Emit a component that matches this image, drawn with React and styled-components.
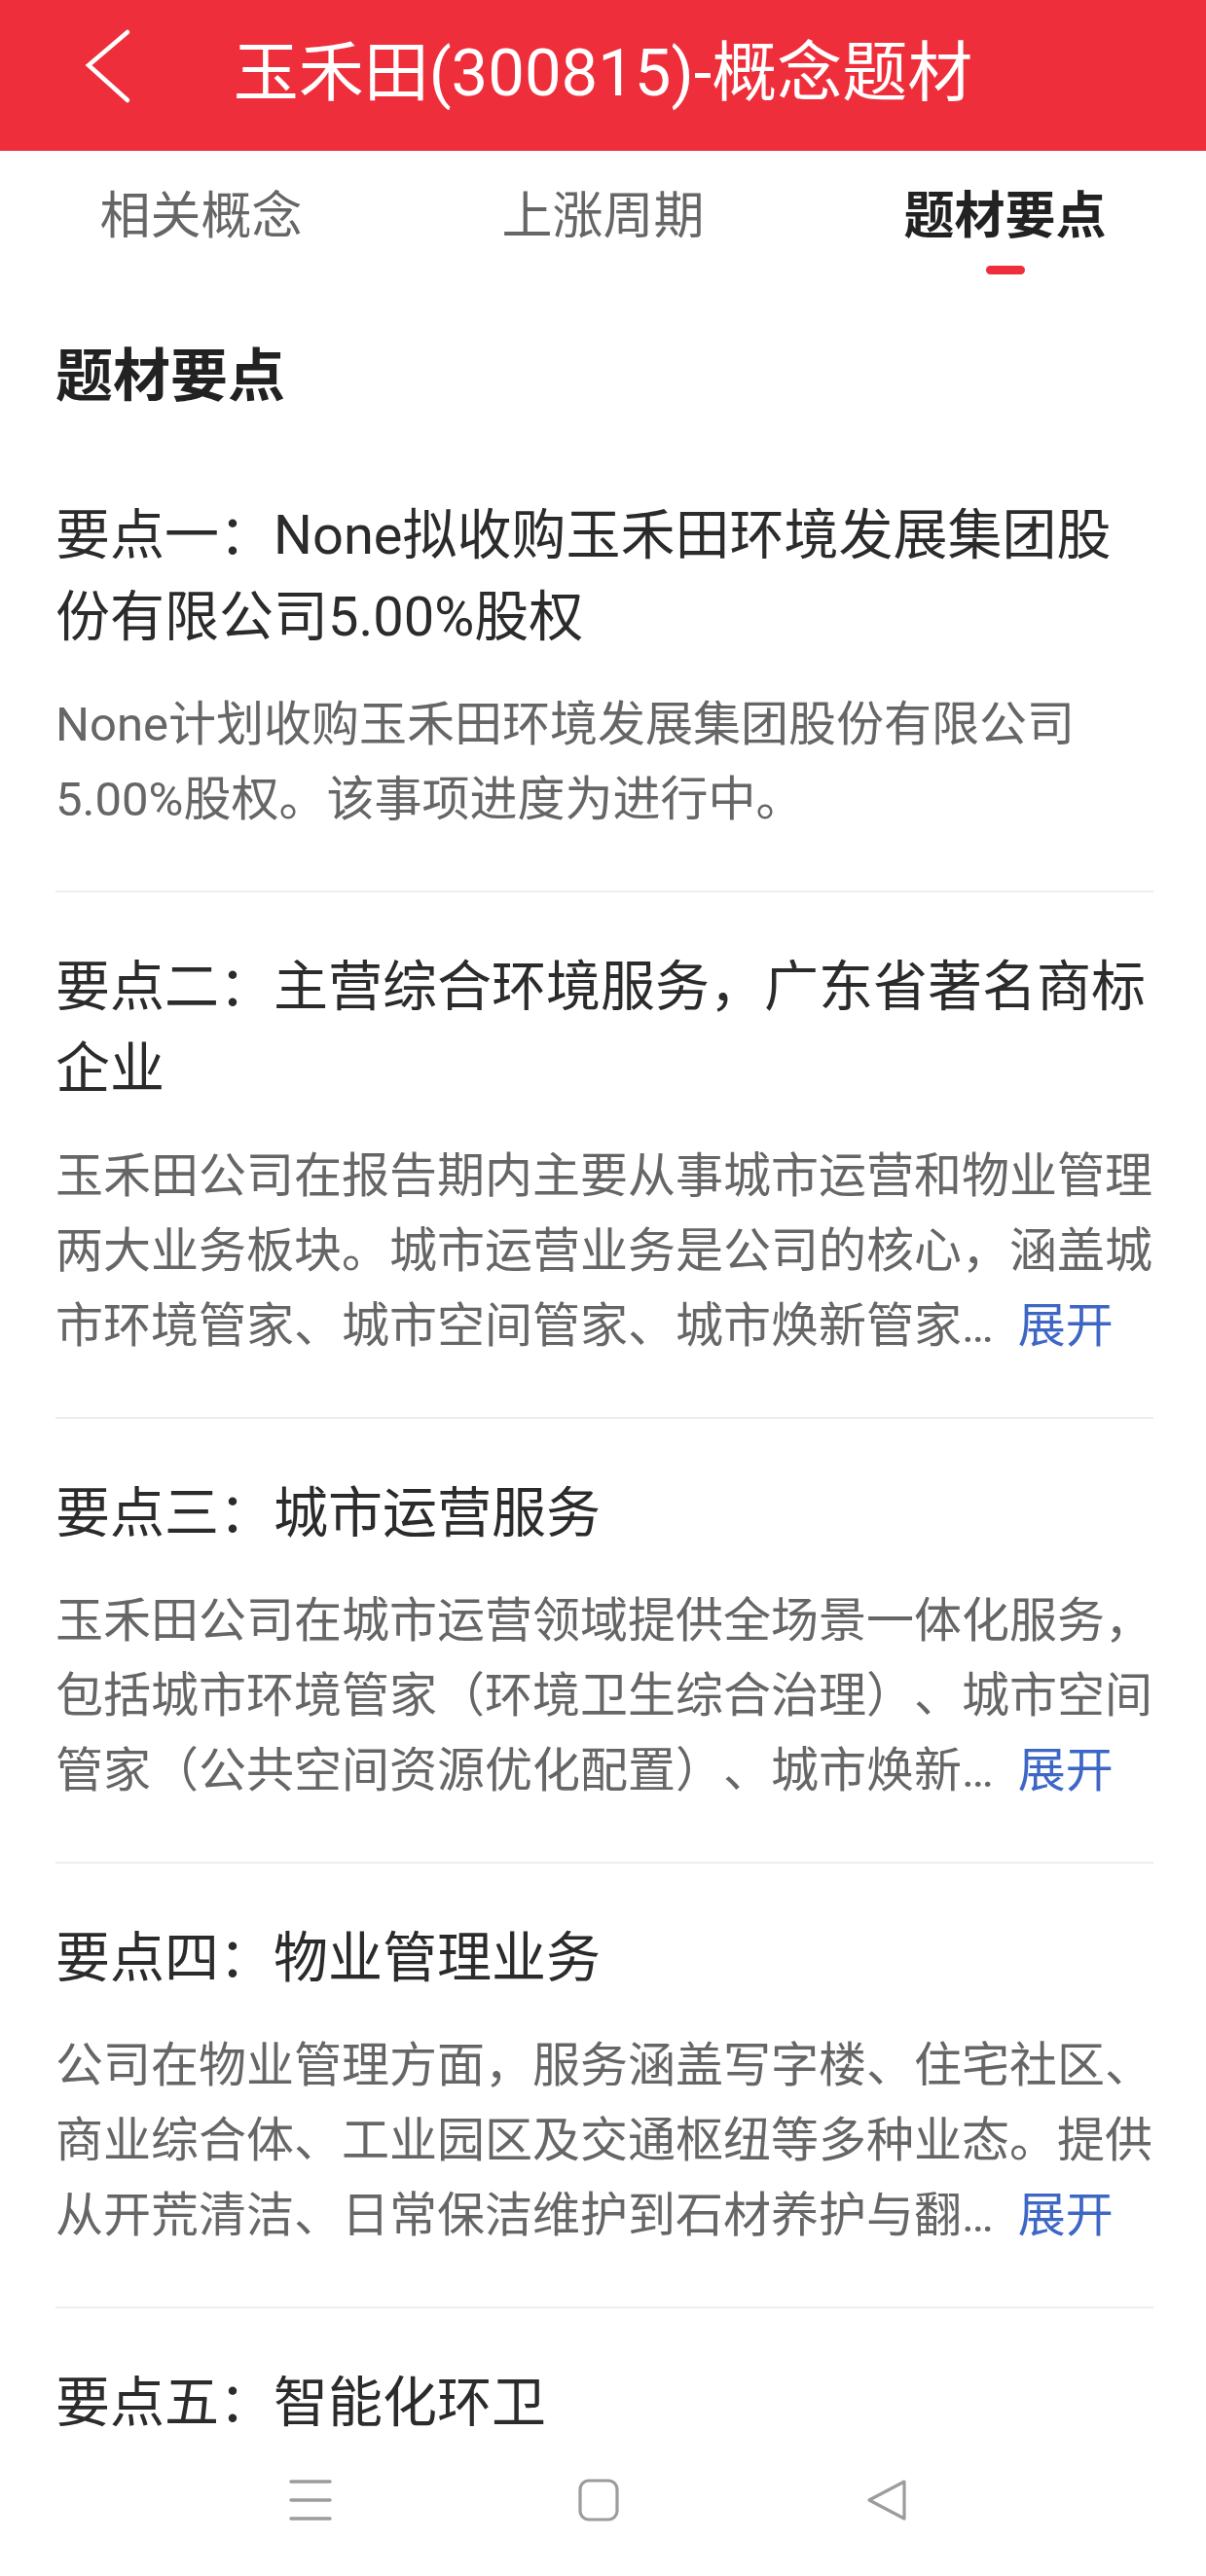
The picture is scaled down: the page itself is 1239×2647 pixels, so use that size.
import React from "react";
import styled, { createGlobalStyle } from "styled-components";

const GlobalStyle = createGlobalStyle`
  html, body {
    margin: 0;
    padding: 0;
    background: #ffffff;
  }
  body {
    font-family: Roboto, "Noto Sans CJK SC", "Noto Sans", sans-serif;
    text-spacing-trim: space-all;
    -webkit-font-smoothing: antialiased;
  }
  * { box-sizing: border-box; }
`;

const RED = "#ee2f3b";

const Screen = styled.div`
  height: 2647px;
  display: flex;
  flex-direction: column;
  overflow: hidden;
  background: #fff;
`;

const Header = styled.header`
  flex-shrink: 0;
  height: 155px;
  background: ${RED};
  display: grid;
  grid-template-columns: 1fr auto 1fr;
  align-items: center;
`;

const BackButton = styled.button`
  justify-self: start;
  align-self: start;
  margin: 28px 0 0 87px;
  padding: 0;
  border: 0;
  background: transparent;
  width: 48px;
  height: 80px;
  display: block;
  svg { display: block; }
`;

const Title = styled.h1`
  margin: 0 0 4px;
  font-size: 67px;
  line-height: 1;
  font-weight: 400;
  color: #fff;
  white-space: nowrap;
`;

const TabBar = styled.nav`
  flex-shrink: 0;
  height: 145px;
  display: grid;
  grid-template-columns: repeat(3, 1fr);
`;

const Tab = styled.div`
  display: flex;
  flex-direction: column;
  align-items: center;
  padding-top: 38px;
`;

const TabLabel = styled.span`
  font-size: 52px;
  line-height: 60px;
  color: ${(p) => (p.$active ? "#222" : "#666")};
  font-weight: ${(p) => (p.$active ? 700 : 400)};
`;

const Indicator = styled.span`
  margin-top: 20px;
  width: 40px;
  height: 9px;
  border-radius: 5px;
  background: ${RED};
  visibility: ${(p) => (p.$active ? "visible" : "hidden")};
`;

const Content = styled.main`
  flex: 1;
  overflow: hidden;
  padding: 0 54px 0 57px;
`;

const Heading = styled.h2`
  margin: 47px 0 26px;
  font-size: 59px;
  line-height: 80px;
  font-weight: 700;
  color: #222;
`;

const Section = styled.section`
  padding: 55px 0 55px;
  border-bottom: ${(p) => (p.$last ? "none" : "2px solid #ededed")};
`;

const PointTitle = styled.h3`
  margin: 0;
  font-size: 56px;
  line-height: 84px;
  font-weight: 400;
  color: #2b2b2b;
`;

const Desc = styled.p`
  margin: 30px 0 0;
  font-size: 49px;
  line-height: 77px;
  color: #666;
`;

const More = styled.span`
  margin-left: 25px;
  color: #3e67c5;
`;

const NavBar = styled.footer`
  flex-shrink: 0;
  height: 140px;
  background: #fff;
  display: grid;
  grid-template-columns: repeat(3, 296px);
  justify-content: center;
  justify-items: center;
  align-items: center;
  padding: 0 9px 16px 0;
  svg { display: block; }
`;

const tabs = ["相关概念", "上涨周期", "题材要点"];

const points = [
  {
    title: "要点一：None拟收购玉禾田环境发展集团股份有限公司5.00%股权",
    desc: "None计划收购玉禾田环境发展集团股份有限公司5.00%股权。该事项进度为进行中。",
  },
  {
    title: "要点二：主营综合环境服务，广东省著名商标企业",
    desc: "玉禾田公司在报告期内主要从事城市运营和物业管理两大业务板块。城市运营业务是公司的核心，涵盖城市环境管家、城市空间管家、城市焕新管家…",
    more: true,
  },
  {
    title: "要点三：城市运营服务",
    desc: "玉禾田公司在城市运营领域提供全场景一体化服务，包括城市环境管家（环境卫生综合治理）、城市空间管家（公共空间资源优化配置）、城市焕新…",
    more: true,
  },
  {
    title: "要点四：物业管理业务",
    desc: "公司在物业管理方面，服务涵盖写字楼、住宅社区、商业综合体、工业园区及交通枢纽等多种业态。提供从开荒清洁、日常保洁维护到石材养护与翻…",
    more: true,
  },
  {
    title: "要点五：智能化环卫",
  },
];

const ICON = "#9c9c9c";

export default function App() {
  return (
    <>
      <GlobalStyle />
      <Screen>
        <Header>
          <BackButton aria-label="返回">
            <svg width="48" height="80" viewBox="0 0 48 80">
              <polyline
                points="44,5 4,39 44,75"
                fill="none"
                stroke="#fff"
                strokeWidth="4.5"
                strokeLinecap="round"
                strokeLinejoin="miter"
              />
            </svg>
          </BackButton>
          <Title>玉禾田(300815)-概念题材</Title>
          <span />
        </Header>

        <TabBar>
          {tabs.map((t, i) => (
            <Tab key={t}>
              <TabLabel $active={i === 2}>{t}</TabLabel>
              <Indicator $active={i === 2} />
            </Tab>
          ))}
        </TabBar>

        <Content>
          <Heading>题材要点</Heading>
          {points.map((p, i) => (
            <Section key={i} $last={i === points.length - 1}>
              <PointTitle>{p.title}</PointTitle>
              {p.desc && (
                <Desc>
                  {p.desc}
                  {p.more && <More>展开</More>}
                </Desc>
              )}
            </Section>
          ))}
        </Content>

        <NavBar>
          <svg width="44" height="44" viewBox="0 0 44 44">
            <g stroke={ICON} strokeWidth="3.5" strokeLinecap="round">
              <line x1="2" y1="3" x2="42" y2="3" />
              <line x1="2" y1="22" x2="42" y2="22" />
              <line x1="2" y1="41" x2="42" y2="41" />
            </g>
          </svg>
          <svg width="42" height="44" viewBox="0 0 42 44">
            <rect x="2" y="2" width="38" height="40" rx="9" fill="none" stroke={ICON} strokeWidth="3.2" />
          </svg>
          <svg width="44" height="44" viewBox="0 0 44 44">
            <path
              d="M40 3 L4 22 L40 41 Z"
              fill="none"
              stroke={ICON}
              strokeWidth="3.2"
              strokeLinejoin="round"
            />
          </svg>
        </NavBar>
      </Screen>
    </>
  );
}
